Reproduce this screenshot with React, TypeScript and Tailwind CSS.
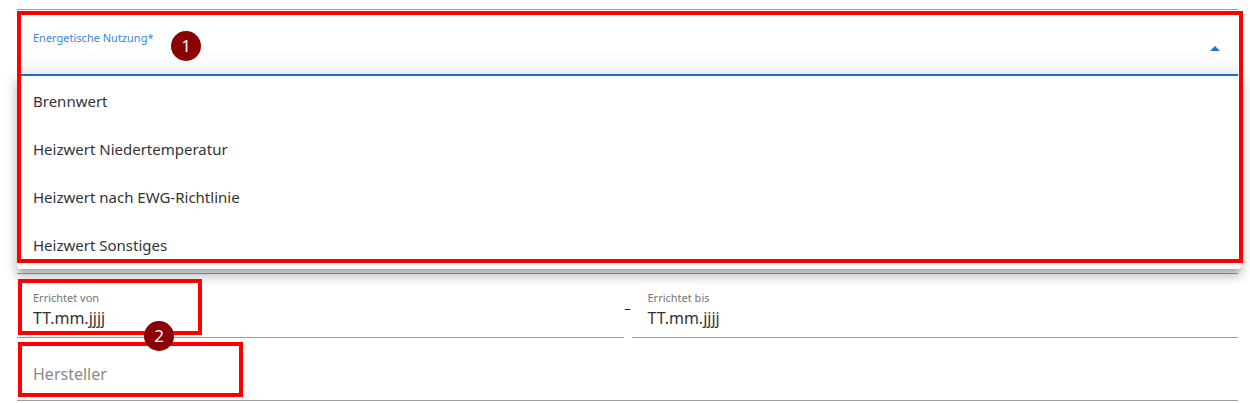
import React from "react";

const options = [
  "Brennwert",
  "Heizwert Niedertemperatur",
  "Heizwert nach EWG-Richtlinie",
  "Heizwert Sonstiges",
];

function Badge({ n, className }: { n: number; className: string }) {
  return (
    <div
      className={
        "absolute flex h-[30px] w-[30px] items-center justify-center rounded-full bg-[#8b0000] text-[17px] text-white " +
        className
      }
    >
      {n}
    </div>
  );
}

function DateField({ label }: { label: string }) {
  return (
    <div className="flex flex-1 flex-col border-b border-[#9e9e9e] px-[16px] pt-[17px]">
      <span className="text-[11px] leading-[14px] text-[#757575]">{label}</span>
      <span className="mt-[2px] text-[16px] leading-[22px] text-[#333333]">TT.mm.jjjj</span>
    </div>
  );
}

export default function App() {
  return (
    <div
      className="relative h-[403px] w-[1250px] overflow-hidden bg-white"
      style={{ fontFamily: '"Noto Sans", "Open Sans", sans-serif' }}
    >
      <div className="ml-[17px] flex w-[1221px] flex-col">
        {/* previous field underline */}
        <div className="h-[10px] border-b border-[#9e9e9e]" />

        {/* select, open */}
        <div className="relative z-10">
          <div className="flex h-[66px] justify-between border-b-2 border-[#1976d2] bg-[linear-gradient(to_bottom,#ffffff_65%,#f5f5f5)] pl-[16px] pr-[18px]">
            <span className="pt-[21px] text-[11px] leading-[14px] text-[#3b86d4]">
              Energetische Nutzung*
            </span>
            <span className="mt-[36px] h-0 w-0 border-x-[5px] border-b-[5px] border-x-transparent border-b-[#1976d2]" />
          </div>

          {/* dropdown menu */}
          <div className="absolute left-0 top-full w-[1224px] rounded-b bg-white pt-[1px] shadow-[0_5px_5px_-3px_rgba(0,0,0,0.2),0_8px_10px_1px_rgba(0,0,0,0.14),0_3px_14px_2px_rgba(0,0,0,0.12)]">
            {options.map((o) => (
              <div
                key={o}
                className="flex h-[48px] items-center px-[16px] text-[15px] text-[#333333]"
              >
                {o}
              </div>
            ))}
          </div>
        </div>

        {/* field hidden behind the menu */}
        <div className="h-[198px] border-b border-[#9e9e9e]" />

        {/* date range */}
        <div className="flex h-[64px]">
          <DateField label="Errichtet von" />
          <div className="flex w-[8px] items-center justify-center pt-[6px] text-[13px] text-[#333333]">
            –
          </div>
          <DateField label="Errichtet bis" />
        </div>

        {/* Hersteller */}
        <div className="flex h-[63px] items-center border-b border-[#9e9e9e] px-[16px] pt-[10px] text-[16px] text-[#8a8a8a]">
          Hersteller
        </div>
      </div>

      {/* annotations */}
      <div className="pointer-events-none absolute left-[17px] top-[11px] z-20 h-[252px] w-[1226px] border-4 border-[#ff0000]" />
      <Badge n={1} className="left-[171px] top-[31px] z-30" />
      <div className="pointer-events-none absolute left-[18px] top-[279px] z-20 h-[56px] w-[184px] border-4 border-[#ff0000]" />
      <div className="pointer-events-none absolute left-[18px] top-[342px] z-20 h-[55px] w-[225px] border-4 border-[#ff0000]" />
      <Badge n={2} className="left-[144px] top-[321px] z-30" />
    </div>
  );
}
